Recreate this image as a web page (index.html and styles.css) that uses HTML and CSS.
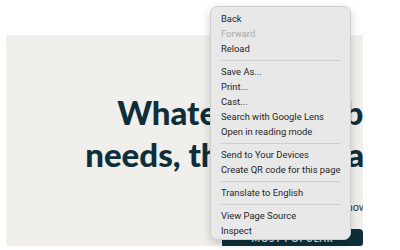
FILE: index.html
```html
<!DOCTYPE html>
<html lang="en">
<head>
	<meta charset="UTF-8">
	<title>Plans</title>
	<link rel="stylesheet" href="styles.css">
</head>
<body>
	<!-- hero panel -->
	<section class="hero">
		<h1 class="hero-title">
			<span class="line">Whatever your business</span>
			<span class="line">needs, there's a plan for you.</span>
		</h1>
		<div class="hero-foot">
			<p class="hero-note">Not sure which? Get to know us</p>
			<a class="hero-btn" href="#">MOST POPULAR</a>
		</div>
	</section>

	<!-- context menu -->
	<ul class="ctx">
		<li>Back</li>
		<li class="off">Forward</li>
		<li>Reload</li>
		<li class="sep"></li>
		<li>Save As...</li>
		<li>Print...</li>
		<li>Cast...</li>
		<li>Search with Google Lens</li>
		<li>Open in reading mode</li>
		<li class="sep"></li>
		<li>Send to Your Devices</li>
		<li>Create QR code for this page</li>
		<li class="sep"></li>
		<li>Translate to English</li>
		<li class="sep"></li>
		<li>View Page Source</li>
		<li>Inspect</li>
	</ul>
</body>
</html>
```

FILE: styles.css
```css
html,body,ul,h1,p{
	margin: 0;
	padding: 0;
}
body{
	background: #fff;
	font-family: Lato, "Liberation Sans", sans-serif;
}
ul{
	list-style: none;
}

/* hero */
.hero{
	width: 357px;
	height: 211px;
	margin: 35px 0 0 6px;
	background: #f0efec;
	border-radius: 0 0 3px 3px;
	overflow: hidden;
	display: flex;
	flex-direction: column;
}
.hero-title{
	padding-top: 56px;
	width: 600px;
	margin-left: -12px;
	text-align: center;
	font-size: 33px;
	font-weight: 900;
	line-height: 42px;
	color: #0e2f3a;
}
.hero-title .line{
	display: block;
	white-space: nowrap;
}
.hero-foot{
	margin-top: auto;
	padding-left: 216px;
	display: flex;
	flex-direction: column;
	gap: 16px;
}
.hero-note{
	font-size: 11px;
	color: #2b3a40;
	white-space: nowrap;
	padding-left: 5px;
}
.hero-btn{
	display: block;
	height: 19px;
	line-height: 19px;
	background: #0e2f3a;
	border-radius: 4px 4px 0 4px;
	color: #dfe6e8;
	font-size: 9px;
	font-weight: 700;
	letter-spacing: 1px;
	text-align: center;
	text-decoration: none;
	margin-bottom: -2px;
}

/* context menu */
.ctx{
	position: absolute;
	top: 6px;
	left: 210px;
	width: 141px;
	padding: 4px 0 1px;
	box-sizing: border-box;
	background: #e8e8e8;
	border: 1px solid #cfcfcf;
	border-radius: 7px;
	box-shadow: 0 3px 10px rgba(0,0,0,.18);
	font-family: Roboto, "Liberation Sans", sans-serif;
	font-size: 9.4px;
	color: #262626;
}
.ctx li{
	height: 15px;
	line-height: 15px;
	padding: 0 10px;
	white-space: nowrap;
}
.ctx .off{
	color: #a9a9a9;
}
.ctx .sep{
	height: 1px;
	margin: 4px 10px 3px;
	padding: 0;
	background: #cdcdcd;
}
```
